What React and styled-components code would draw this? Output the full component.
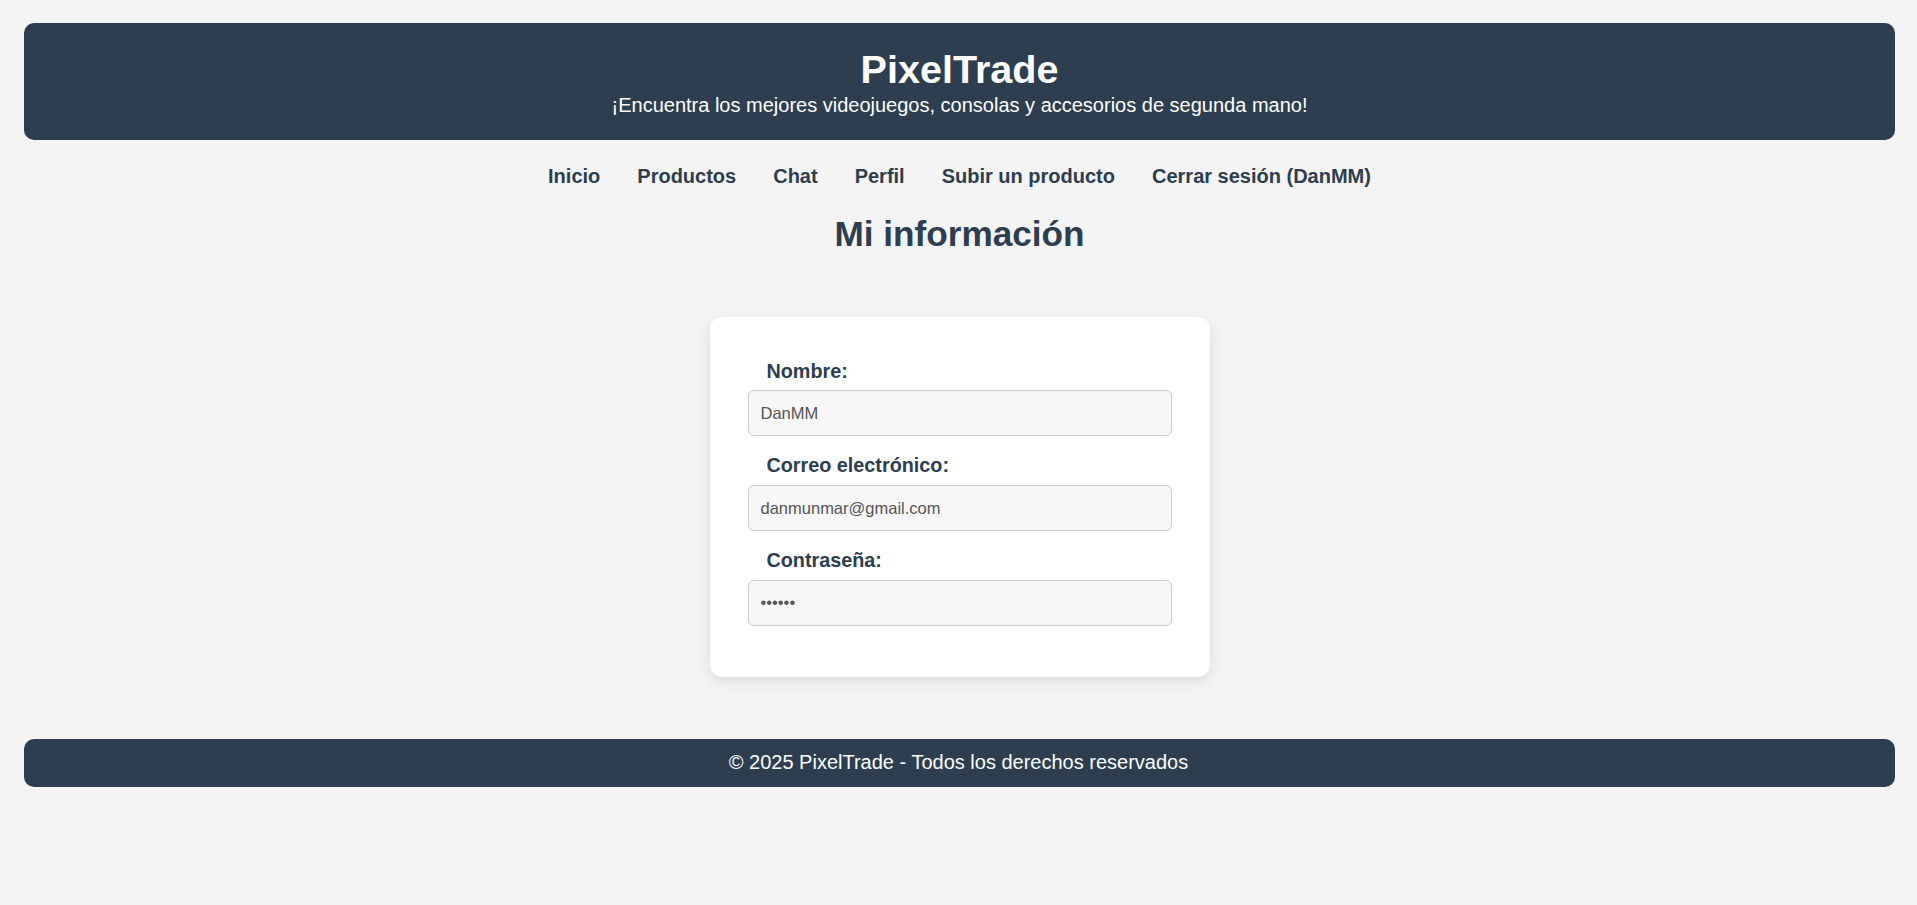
import React from 'react';
import styled, { createGlobalStyle } from 'styled-components';

const GlobalStyle = createGlobalStyle`
  html, body {
    margin: 0;
    padding: 0;
    background: #f4f4f4;
    font-family: 'Liberation Sans', Arial, sans-serif;
    color: #2c3e50;
  }
  * {
    box-sizing: border-box;
  }
`;

const Page = styled.div`
  display: flex;
  flex-direction: column;
  padding: 23px 22px 0 24px;
`;

const Header = styled.header`
  background: #2c3e50;
  color: #ffffff;
  border-radius: 10px;
  padding: 24px 20px;
  text-align: center;

  h1 {
    margin: 0;
    font-size: 39.6px;
    font-weight: 700;
    line-height: 45.5px;
  }

  p {
    margin: 1px 0 0;
    font-size: 20px;
    line-height: 22.8px;
  }
`;

const Nav = styled.nav`
  display: flex;
  justify-content: center;
  gap: 37px;
  margin-top: 25px;
`;

const NavLink = styled.a`
  color: #2c3e50;
  font-size: 20px;
  font-weight: 700;
  line-height: 22.8px;
  text-decoration: none;
  cursor: pointer;
`;

const Title = styled.h2`
  margin: 26px 0 0;
  text-align: center;
  font-size: 35.2px;
  line-height: 40.5px;
  font-weight: 700;
  color: #2c3e50;
`;

const Card = styled.form`
  align-self: center;
  width: 500px;
  margin-top: 62px;
  padding: 43px 38px 51px;
  background: #ffffff;
  border-radius: 12px;
  box-shadow: 0 4px 14px rgba(0, 0, 0, 0.1);
  display: flex;
  flex-direction: column;
`;

const Field = styled.div`
  display: flex;
  flex-direction: column;
  margin-top: ${p => (p.$first ? '0' : '18px')};
`;

const Label = styled.label`
  padding-left: 19px;
  margin-bottom: 8px;
  font-size: 19.8px;
  line-height: 22.8px;
  font-weight: 700;
  color: #2c3e50;
`;

const Input = styled.input`
  width: 100%;
  height: 46px;
  padding: 0 12px;
  border: 1px solid #cccccc;
  border-radius: 6px;
  background: #f7f7f7;
  font-family: 'Liberation Sans', Arial, sans-serif;
  font-size: 16.5px;
  color: #555555;
  outline: none;
`;

const Footer = styled.footer`
  margin-top: 62px;
  height: 48px;
  background: #2c3e50;
  color: #ffffff;
  border-radius: 10px;
  display: flex;
  align-items: center;
  justify-content: center;
  font-size: 20px;
  padding-right: 2px;
`;

const links = ['Inicio', 'Productos', 'Chat', 'Perfil', 'Subir un producto', 'Cerrar sesión (DanMM)'];

const fields = [
  { id: 'nombre', label: 'Nombre:', type: 'text', value: 'DanMM' },
  { id: 'correo', label: 'Correo electrónico:', type: 'email', value: 'danmunmar@gmail.com' },
  { id: 'password', label: 'Contraseña:', type: 'password', value: 'secret' },
];

const App = () => (
  <>
    <GlobalStyle />
    <Page>
      <Header>
        <h1>PixelTrade</h1>
        <p>¡Encuentra los mejores videojuegos, consolas y accesorios de segunda mano!</p>
      </Header>

      <Nav>
        {links.map(link => (
          <NavLink key={link}>{link}</NavLink>
        ))}
      </Nav>

      <Title>Mi información</Title>

      <Card onSubmit={e => e.preventDefault()}>
        {fields.map((f, i) => (
          <Field key={f.id} $first={i === 0}>
            <Label htmlFor={f.id}>{f.label}</Label>
            <Input id={f.id} type={f.type} defaultValue={f.value} readOnly />
          </Field>
        ))}
      </Card>

      <Footer>© 2025 PixelTrade - Todos los derechos reservados</Footer>
    </Page>
  </>
);

export default App;
